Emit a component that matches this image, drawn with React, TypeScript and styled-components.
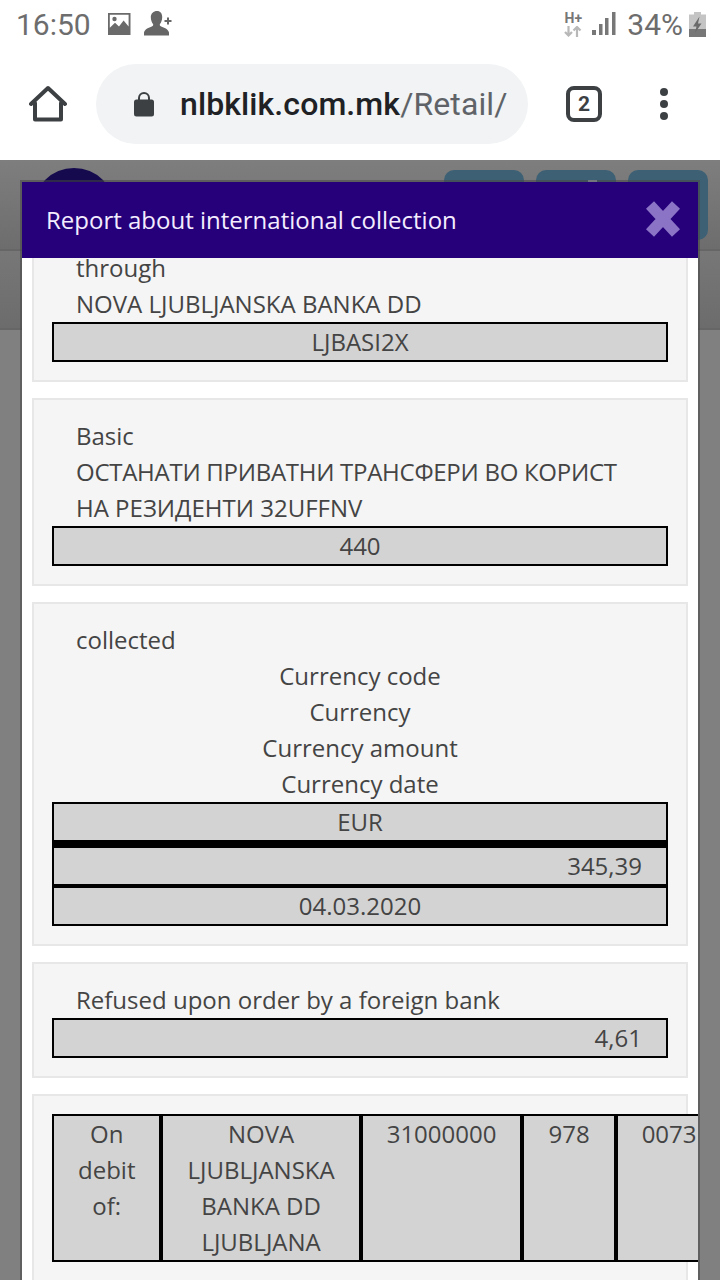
import React from "react";
import styled, { createGlobalStyle } from "styled-components";

const GlobalStyle = createGlobalStyle`
  html, body {
    margin: 0;
    padding: 0;
    background: #fff;
  }
  * {
    box-sizing: border-box;
  }
`;

const ImageIcon = () => (
  <svg width="24" height="24" viewBox="0 0 24 24">
    <path fill="#6a6a6a" fillRule="evenodd" d="M1 1h22.5v22H1zM2.8 2.8v13l5.2-5 4 3.6 4.6-6 5 6V2.8z" />
    <circle cx="7.5" cy="7" r="2.2" fill="#6a6a6a" />
  </svg>
);

const AddContactIcon = () => (
  <svg width="30" height="28" viewBox="0 0 30 28">
    <path
      fill="#666"
      d="M13 1c3.4 0 5.2 2.6 5.2 6 0 3-1 5.4-2.2 7-.6 1 0 2 1.2 2.6 3 1.2 6.800 2.200 7.800 6v3H0v-3c1-3.800 4.800-4.800 7.800-6 1.200-.6 1.800-1.600 1.200-2.600-1.200-1.600-2.200-4-2.200-7C6.800 3.600 9.600 1 13 1z"
    />
    <path stroke="#666" strokeWidth="2" d="M20.500 11h7M24 7.500v7" />
  </svg>
);

const NetworkArrows = () => (
  <svg width="18" height="11" viewBox="0 0 18 11">
    <path
      fill="none"
      stroke="#b8b8b8"
      strokeWidth="2.200"
      d="M4.500 0v10M1 6l3.500 3.500L8 6M13 11V1M9.500 4.500L13 1l3.500 3.500"
    />
  </svg>
);

const SignalIcon = () => (
  <svg width="24" height="24" viewBox="0 0 24 24">
    <path fill="#777" d="M0 18h4v5H0zM7 12h3.500v11H7zM13 6h3.500v17H13zM20 0h3.500v23H20z" />
  </svg>
);

const BatteryIcon = () => (
  <svg width="17" height="25" viewBox="0 0 17 25">
    <path fill="#c4c4c4" d="M5 0h7v2.500h5V25H0V2.500h5z" />
    <path fill="#777" d="M0 17h17v8H0z" />
    <path fill="#6a6a6a" d="M10.500 4.500L4 14.500h3.500L6 21l6.500-9.500H9z" />
  </svg>
);

const HomeIcon = () => (
  <svg width="38" height="38" viewBox="0 0 38 38">
    <path
      fill="none"
      stroke="#3c4043"
      strokeWidth="4"
      strokeLinecap="round"
      strokeLinejoin="round"
      d="M2 19L19 3l17 16M6 18v16.500h26V18"
    />
  </svg>
);

const LockIcon = () => (
  <svg width="20" height="26" viewBox="0 0 20 26">
    <path fill="none" stroke="#3c4043" strokeWidth="2" d="M5 10V7c0-3 2.200-5 5-5s5 2 5 5v3" />
    <rect x="0" y="8.500" width="20" height="17" rx="2.500" fill="#3c4043" />
  </svg>
);

const CloseIcon = () => (
  <svg width="34" height="36" viewBox="0 0 34 36">
    <path stroke="#8b74c6" strokeWidth="11" d="M4 4l26 28M30 4L4 32" />
  </svg>
);

const StatusBar = styled.div`
  height: 54px;
  padding: 0 14px 6px 16px;
  display: flex;
  align-items: center;
  font-family: Roboto, sans-serif;
  color: #6d6d6d;
`;

const Clock = styled.div`
  font-size: 30px;
  margin-right: 16px;
`;

const NotifyIcons = styled.div`
  display: flex;
  align-items: center;
  gap: 13px;
`;

const StatusRight = styled.div`
  margin-left: auto;
  display: flex;
  align-items: center;
`;

const NetworkStack = styled.div`
  width: 18px;
  margin-right: 10px;
  display: flex;
  flex-direction: column;
  align-items: center;
  gap: 2px;
`;

const NetworkLabel = styled.span`
  font-size: 14px;
  font-weight: 700;
  line-height: 12px;
  color: #777;
`;

const Percent = styled.div`
  font-size: 30px;
  margin: 0 6px 0 11px;
`;

const Toolbar = styled.div`
  height: 106px;
  padding: 10px 0 16px 0;
  display: flex;
  align-items: center;
  background: #fff;
`;

const ToolButton = styled.div<{ $width: number }>`
  width: ${({ $width }) => $width}px;
  flex: none;
  display: flex;
  align-items: center;
  justify-content: center;
`;

const Omnibox = styled.div`
  width: 432px;
  height: 80px;
  border-radius: 40px;
  background: #f1f3f4;
  display: flex;
  align-items: center;
  padding-left: 38px;
  gap: 26px;
  font-family: Roboto, sans-serif;
  font-size: 32px;
  letter-spacing: 0.1px;
  white-space: nowrap;
`;

const Host = styled.span`
  color: #202124;
  font-weight: 500;
`;

const UrlPath = styled.span`
  color: #5f6368;
`;

const TabCount = styled.div`
  width: 36px;
  height: 36px;
  border: 4px solid #3c4043;
  border-radius: 8px;
  display: flex;
  align-items: center;
  justify-content: center;
  font-family: Roboto, sans-serif;
  font-size: 21px;
  font-weight: 700;
  color: #3c4043;
`;

const MenuDots = styled.div`
  display: flex;
  flex-direction: column;
  gap: 4px;
`;

const Dot = styled.span`
  width: 8px;
  height: 8px;
  border-radius: 50%;
  background: #3c4043;
`;

const Site = styled.div`
  position: relative;
  height: 1120px;
  overflow: hidden;
  background: #808080;
`;

const SiteHeader = styled.div`
  height: 91px;
  padding: 10px 12px 0 33px;
  display: flex;
  gap: 12px;
  background: linear-gradient(#7e7e7e, #6d6d6d);
  border-bottom: 2px solid #666;
`;

const Logo = styled.div`
  width: 82px;
  height: 82px;
  margin: -2px auto 0 0;
  border-radius: 50%;
  background: #160a4e;
`;

const HeaderButton = styled.div<{ $glyph?: boolean }>`
  position: relative;
  width: 80px;
  height: 70px;
  border-radius: 10px;
  background: #3e6074;

  /* top of the button's icon, the rest sits under the dialog */
  &::after {
    content: "";
    display: ${({ $glyph }) => ($glyph ? "block" : "none")};
    position: absolute;
    top: 10px;
    left: 52px;
    width: 9px;
    height: 2px;
    background: #a9b7bf;
  }
`;

const SiteNav = styled.div`
  height: 79px;
  background: linear-gradient(#777, #6c6c6c);
  border-bottom: 2px solid #666;
`;

const Overlay = styled.div`
  position: absolute;
  inset: 22px 22px 0;
  display: flex;
  flex-direction: column;
  box-shadow: 0 0 0 2px rgba(70, 70, 70, 0.55);
  background: #fff;
`;

const ModalHeader = styled.div`
  height: 76px;
  flex: none;
  padding: 0 18px 2px 24px;
  display: flex;
  align-items: center;
  justify-content: space-between;
  background: #26007a;
  color: #f3edff;
  font-family: "Open Sans", sans-serif;
  font-size: 24px;
  position: relative;
  z-index: 1;
`;

const ModalBody = styled.div`
  flex: 1;
  overflow: hidden;
  padding: 0 10px;
  font-family: "Open Sans", sans-serif;
  font-size: 24px;
  line-height: 36px;
  color: #444;
`;

const ScrolledContent = styled.div`
  margin-top: -28px;
  display: flex;
  flex-direction: column;
  gap: 16px;
`;

const Card = styled.section`
  padding: 18px;
  background: #f5f5f5;
  border: 2px solid #e7e7e7;
`;

const Label = styled.div<{ $center?: boolean }>`
  padding: 0 24px;
  text-align: ${({ $center }) => ($center ? "center" : "left")};
`;

const TightText = styled.span`
  letter-spacing: -0.27px;
`;

const Field = styled.div<{ $right?: boolean }>`
  height: 40px;
  padding: 0 24px;
  border: 2px solid #000;
  background: #d3d3d3;
  text-align: ${({ $right }) => ($right ? "right" : "center")};
`;

const EmptyField = styled.div`
  height: 4px;
  border: 2px solid #000;
`;

const DebitTable = styled.table`
  width: 100%;
  border-collapse: separate;
  border-spacing: 0;
`;

const DebitCell = styled.td`
  padding: 0 24px;
  border: 2px solid #000;
  background: #d3d3d3;
  text-align: center;
  vertical-align: top;
`;

export default function App() {
  return (
    <>
      <GlobalStyle />
      <StatusBar>
        <Clock>16:50</Clock>
        <NotifyIcons>
          <ImageIcon />
          <AddContactIcon />
        </NotifyIcons>
        <StatusRight>
          <NetworkStack>
            <NetworkLabel>H+</NetworkLabel>
            <NetworkArrows />
          </NetworkStack>
          <SignalIcon />
          <Percent>34%</Percent>
          <BatteryIcon />
        </StatusRight>
      </StatusBar>

      <Toolbar>
        <ToolButton $width={96}>
          <HomeIcon />
        </ToolButton>
        <Omnibox>
          <LockIcon />
          <span>
            <Host>nlbklik.com.mk</Host>
            <UrlPath>/Retail/</UrlPath>
          </span>
        </Omnibox>
        <ToolButton $width={112}>
          <TabCount>2</TabCount>
        </ToolButton>
        <ToolButton $width={48}>
          <MenuDots>
            <Dot />
            <Dot />
            <Dot />
          </MenuDots>
        </ToolButton>
      </Toolbar>

      <Site>
        <SiteHeader>
          <Logo />
          <HeaderButton />
          <HeaderButton $glyph />
          <HeaderButton />
        </SiteHeader>
        <SiteNav />

        <Overlay>
          <ModalHeader>
            Report about international collection
            <CloseIcon />
          </ModalHeader>
          <ModalBody>
            <ScrolledContent>
              <Card>
                <Label>through</Label>
                <Label>NOVA LJUBLJANSKA BANKA DD</Label>
                <Field>LJBASI2X</Field>
              </Card>

              <Card>
                <Label>Basic</Label>
                <Label>
                  <TightText>ОСТАНАТИ ПРИВАТНИ ТРАНСФЕРИ ВО КОРИСТ</TightText> НА
                  РЕЗИДЕНТИ 32UFFNV
                </Label>
                <Field>440</Field>
              </Card>

              <Card>
                <Label>collected</Label>
                <Label $center>Currency code</Label>
                <Label $center>Currency</Label>
                <Label $center>Currency amount</Label>
                <Label $center>Currency date</Label>
                <Field>EUR</Field>
                <EmptyField />
                <Field $right>345,39</Field>
                <Field>04.03.2020</Field>
              </Card>

              <Card>
                <Label>Refused upon order by a foreign bank</Label>
                <Field $right>4,61</Field>
              </Card>

              <Card>
                <DebitTable>
                  <tbody>
                    <tr>
                      <DebitCell>On debit of:</DebitCell>
                      <DebitCell>NOVA LJUBLJANSKA BANKA DD LJUBLJANA</DebitCell>
                      <DebitCell>31000000</DebitCell>
                      <DebitCell>978</DebitCell>
                      <DebitCell>0073</DebitCell>
                    </tr>
                  </tbody>
                </DebitTable>
              </Card>
            </ScrolledContent>
          </ModalBody>
        </Overlay>
      </Site>
    </>
  );
}
